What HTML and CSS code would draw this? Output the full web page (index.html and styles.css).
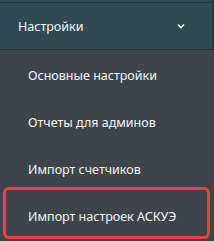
FILE: index.html
```html
<!DOCTYPE html>
<html lang="ru">
<head>
  <meta charset="UTF-8">
  <meta name="viewport" content="width=device-width, initial-scale=1.0">
  <title>Настройки</title>
  <link rel="stylesheet" href="styles.css">
</head>
<body>
  <div class="sidebar">
    <div class="strip"></div>
    <div class="menu-header">
      <span>Настройки</span>
      <svg class="chevron" width="8" height="6" viewBox="0 0 8 6">
        <path d="M1 1.5 L4 4.5 L7 1.5" fill="none" stroke="#ffffff" stroke-width="1.6"/>
      </svg>
    </div>
    <ul class="submenu">
      <li class="submenu-item">Основные настройки</li>
      <li class="submenu-item">Отчеты для админов</li>
      <li class="submenu-item">Импорт счетчиков</li>
      <li class="submenu-item selected">Импорт настроек АСКУЭ</li>
    </ul>
  </div>
</body>
</html>
```
FILE: styles.css
```css
body {
  margin: 0;
  background-color: #3e4449;
  font-family: "Noto Sans", "Open Sans", sans-serif;
  color: #f4f4f4;
}
.sidebar {
  width: 214px;
  height: 241px;
  overflow: hidden;
}
.strip {
  height: 2px;
  background-color: #2f4a52;
  border-right: 2px solid #22363c;
}
.menu-header {
  display: flex;
  align-items: center;
  justify-content: space-between;
  height: 46px;
  padding: 0 27px 0 18px;
  background-color: #2f4a52;
  border-top: 1px solid #22363c;
  border-bottom: 1px solid #263236;
  border-right: 2px solid #22363c;
  font-size: 12.5px;
}
.chevron {
  display: block;
}
.submenu {
  list-style: none;
  margin: 0;
  padding: 2px 0 0 0;
}
.submenu-item {
  position: relative;
  display: flex;
  align-items: center;
  height: 47px;
  padding-left: 28px;
  font-size: 12.5px;
}
.submenu-item.selected::after {
  content: "";
  position: absolute;
  left: 3px;
  right: 4px;
  top: -6px;
  bottom: 1px;
  border: 3px solid #ee3f3f;
  border-radius: 6px;
}
```
